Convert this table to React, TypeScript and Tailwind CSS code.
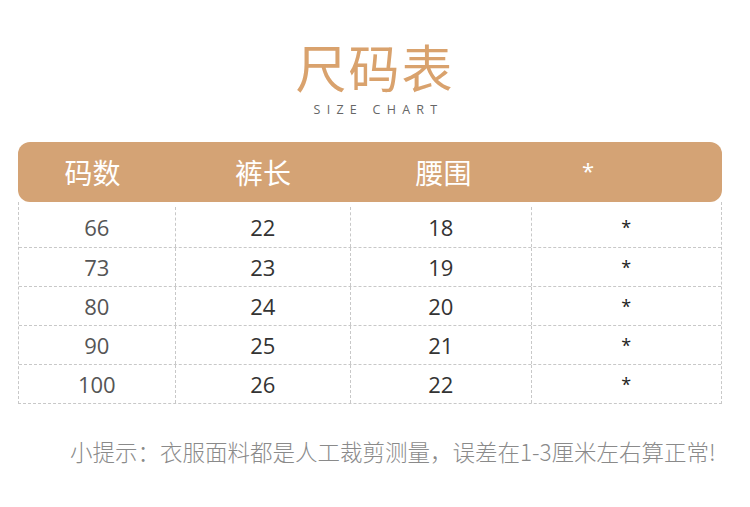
const cols = ['w-[157px]', 'w-[176px]', 'w-[181px]', 'w-[190px]'];

const rows = [
  ['66', '22', '18', '*'],
  ['73', '23', '19', '*'],
  ['80', '24', '20', '*'],
  ['90', '25', '21', '*'],
  ['100', '26', '22', '*'],
];

const cjk = "font-['Noto_Sans_CJK_SC',sans-serif]";

export default function App() {
  return (
    <div className={`w-[750px] h-[507px] bg-white ${cjk} relative overflow-hidden`}>
      <div className="flex flex-col items-center pt-[38px]">
        <h1 className="text-[51px] leading-[56px] text-[#d9a26d] tracking-[2px] font-normal">尺码表</h1>
        <p className="mt-[8px] pl-[7px] text-[12.5px] leading-[16px] tracking-[0.5em] text-[#666] font-['Open_Sans',sans-serif]">
          SIZE CHART
        </p>
      </div>

      <div className="mx-[18px] mt-[24px] w-[704px]">
        <div className="flex h-[60px] items-center rounded-[12px] bg-[#d4a375] text-white text-[28px]">
          <div className={`${cols[0]} text-center pr-[8px]`}>码数</div>
          <div className={`${cols[1]} text-center`}>裤长</div>
          <div className={`${cols[2]} text-center pl-[4px]`}>腰围</div>
          <div className={`${cols[3]} pl-[50px] text-[22px] -mt-[4px] font-['Open_Sans',sans-serif]`}>*</div>
        </div>

        <div className="border-x border-b border-dashed border-[#c8c8c8] font-['Open_Sans',sans-serif] text-[22px] text-[#333]">
          {rows.map((r, i) => (
            <div
              key={r[0]}
              className={`flex ${i === 0 ? 'h-[45px] pt-[5px]' : 'h-[39px] border-t border-dashed border-[#c8c8c8]'}`}
            >
              {r.map((c, j) => (
                <div
                  key={j}
                  className={`${cols[j]} flex items-center justify-center ${j < 3 ? 'border-r border-dashed border-[#c8c8c8]' : 'text-[18px] text-[#222]'} ${j === 0 ? 'text-[#555]' : ''}`}
                >
                  {c}
                </div>
              ))}
            </div>
          ))}
        </div>
      </div>

      <p className="mt-[32px] pl-[70px] text-[22.5px] leading-[30px] text-[#8a8a8a] font-light whitespace-nowrap">
        小提示：衣服面料都是人工裁剪测量，误差在1-3厘米左右算正常!
      </p>
    </div>
  );
}
